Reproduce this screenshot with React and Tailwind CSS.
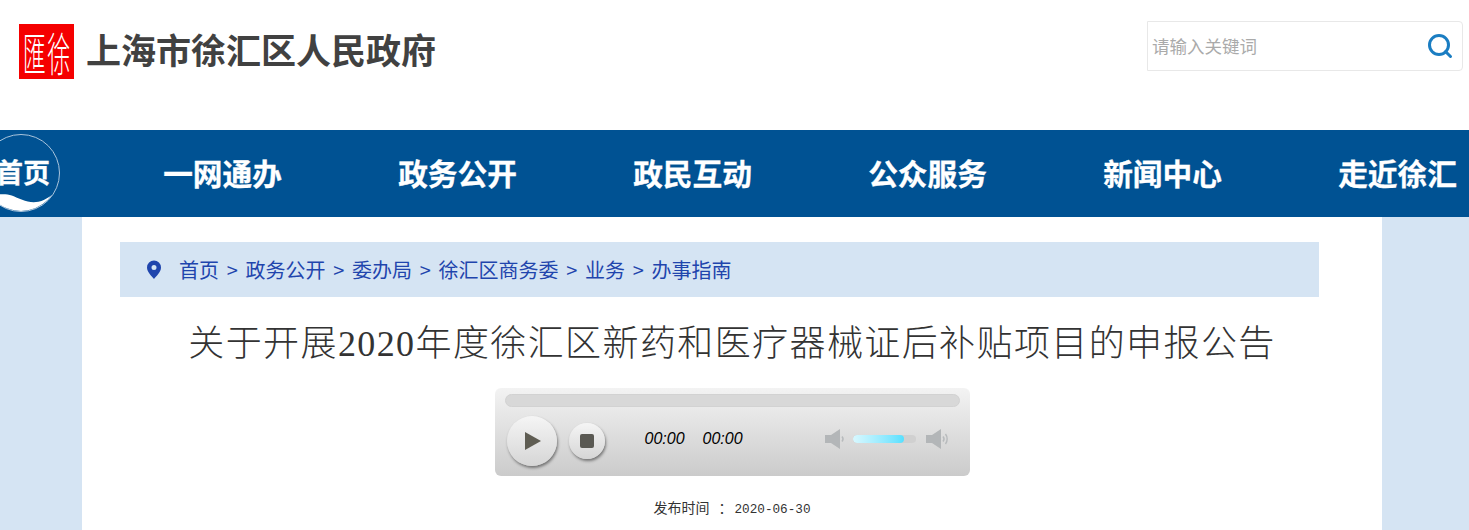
import { useState } from "react";

const navItems = ["一网通办", "政务公开", "政民互动", "公众服务", "新闻中心", "走近徐汇"];
const crumbs = ["首页", "政务公开", "委办局", "徐汇区商务委", "业务", "办事指南"];

const cjk = "font-['Noto_Sans_CJK_SC','Liberation_Sans',sans-serif]";

function Seal() {
  return (
    <div className="flex h-[55px] w-[55px] shrink-0 bg-[#f50000] p-[3px] text-white">
      <div className="flex flex-1 items-center justify-center">
        <span className={`${cjk} scale-y-[2] text-[23px] leading-none font-light`}>匯</span>
      </div>
      <div className="flex flex-1 items-center justify-center">
        <span className={`${cjk} scale-y-[2] text-[23px] leading-none font-light`}>徐</span>
      </div>
    </div>
  );
}

function HomeBadge() {
  return (
    <div className="absolute top-[4px] left-[-18px] h-[78px] w-[78px] overflow-hidden rounded-full border-[1.5px] border-[#a9c4dc]">
      <svg className="absolute inset-0 h-full w-full" viewBox="0 0 74 74">
        <path d="M0 60 C8 59 20 56 28 59 C36 62 44 67 54 65 C62 63 68 58 74 52 L74 74 L0 74 Z" fill="#fff" />
      </svg>
      <span className="absolute top-[21px] left-[13px] text-[27px] leading-[32px] font-bold whitespace-nowrap text-white [-webkit-text-stroke:0.3px_white]">
        首页
      </span>
    </div>
  );
}

function RoundButton({ size, children }) {
  return (
    <div
      className={`flex items-center justify-center rounded-full bg-gradient-to-b from-[#f5f5f5] to-[#d6d6d6] shadow-[1px_2px_3px_rgba(0,0,0,0.45)] ${size}`}
    >
      {children}
    </div>
  );
}

function Speaker({ loud }) {
  return (
    <svg width="24" height="22" viewBox="0 0 24 22" fill="none">
      <path d="M0 7h6L15 1v20l-9-6H0z" fill="#b3b6b8" />
      <path d="M17 8.500c1.200 1.400 1.200 3.600 0 5" stroke="#b7babc" strokeWidth="1.4" />
      {loud && <path d="M19.500 6c2.200 2.800 2.200 7.200 0 10" stroke="#b7babc" strokeWidth="1.4" />}
    </svg>
  );
}

function Player() {
  return (
    <div className="mx-auto h-[88px] w-[475px] rounded-[6px] bg-gradient-to-b from-[#f3f3f3] to-[#cbcbcb] px-[10px] pt-[6px]">
      <div className="h-[13px] rounded-full border border-[#d2d2d2] bg-[#d8d8d8]" />
      <div className="flex items-center pt-[9px] pl-[2px]">
        <RoundButton size="h-[50px] w-[50px]">
          <svg width="20" height="20" viewBox="0 0 20 20" className="ml-[3px]">
            <path d="M2 1l16 9-16 9z" fill="#5f5d53" />
          </svg>
        </RoundButton>
        <div className="ml-[12px]">
          <RoundButton size="h-[36px] w-[36px]">
            <div className="h-[14px] w-[14px] rounded-[2px] bg-[#5a5953]" />
          </RoundButton>
        </div>
        <div className="mb-[5px] ml-[40px] flex gap-[18px] font-['Liberation_Sans',sans-serif] text-[16px] text-black italic">
          <span>00:00</span>
          <span>00:00</span>
        </div>
        <div className="mb-[5px] ml-[82px] flex items-center">
          <Speaker />
          <div className="ml-[4px] h-[8px] w-[63px] overflow-hidden rounded-full bg-[#d0d0d0]">
            <div className="h-full w-[51px] rounded-full bg-gradient-to-r from-[#d8f8ff] to-[#55e0ff]" />
          </div>
          <div className="ml-[10px]">
            <Speaker loud />
          </div>
        </div>
      </div>
    </div>
  );
}

export default function App() {
  const [keyword, setKeyword] = useState("");

  return (
    <div className={`h-[530px] w-[1469px] overflow-hidden bg-[#d5e4f3] ${cjk}`}>
      <header className="flex h-[130px] items-start justify-between bg-white pt-[21px] pr-[6px] pl-[19px]">
        <div className="mt-[3px] flex items-start">
          <Seal />
          <h1 className="ml-[12px] text-[35px] leading-[49px] font-bold text-[#414141]">上海市徐汇区人民政府</h1>
        </div>
        <div className="flex h-[50px] w-[316px] items-center rounded-r-[4px] border border-[#e8e8e8] bg-white">
          <input
            value={keyword}
            onChange={(e) => setKeyword(e.target.value)}
            placeholder="请输入关键词"
            className="min-w-0 flex-1 pl-[4px] text-[17.5px] outline-none placeholder:text-[#aaaaaa]"
          />
          <svg className="mr-[9px]" width="26" height="26" viewBox="0 0 26 26" fill="none">
            <circle cx="12" cy="12" r="9.500" stroke="#1a7dc2" strokeWidth="3" />
            <path d="M18.500 18.500l5 5" stroke="#1a7dc2" strokeWidth="3" strokeLinecap="round" />
          </svg>
        </div>
      </header>

      <nav className="relative flex h-[87px] items-center overflow-hidden bg-[#005293] pb-[1px] pl-[105px]">
        <HomeBadge />
        {navItems.map((item) => (
          <a
            key={item}
            className="w-[235px] shrink-0 text-center text-[29.700px] font-bold whitespace-nowrap text-white [-webkit-text-stroke:0.3px_white]"
          >
            {item}
          </a>
        ))}
      </nav>

      <main className="ml-[82px] h-[313px] w-[1300px] bg-white px-[38px] pt-[25px]">
        <div className="flex h-[55px] w-[1199px] items-center bg-[#d5e4f3] pl-[26px] text-[20px] text-[#1f45ad]">
          <svg width="16" height="20" viewBox="0 0 16 20" className="mr-[17px]">
            <path
              fillRule="evenodd"
              d="M8 0.5a7 7 0 0 1 7 7c0 4.500-4.500 8.500-7 11.500C5.500 16 1 12 1 7.500a7 7 0 0 1 7-7zm0 4.500a2.500 2.500 0 1 0 0 5 2.500 2.500 0 0 0 0-5z"
              fill="#1f45ad"
            />
          </svg>
          {crumbs.map((c, i) => (
            <span key={c} className="flex items-center">
              {i > 0 && <span className="mx-[7.700px]">&gt;</span>}
              {c}
            </span>
          ))}
        </div>

        <h2 className="mt-[23px] text-center font-['Liberation_Serif','Noto_Sans_CJK_SC',serif] text-[36px] leading-[48px] font-light tracking-[1.400px] text-[#333333]">
          关于开展2020年度徐汇区新药和医疗器械证后补贴项目的申报公告
        </h2>

        <div className="mt-[20px]">
          <Player />
        </div>

        <p className="mt-[21px] text-center text-[14px] leading-[20px] text-[#333333]">
          发布时间<span className="mr-[2px] ml-[9px]">：</span>
          <span className="font-['Liberation_Mono',monospace] text-[12.700px]">2020-06-30</span>
        </p>
      </main>
    </div>
  );
}
